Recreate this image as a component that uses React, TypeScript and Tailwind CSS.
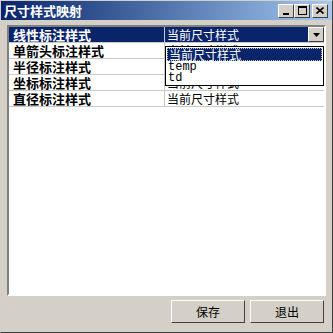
import { Fragment } from 'react'

const cjk = '"Noto Sans CJK SC", "Liberation Sans", sans-serif'

const rows = ['线性标注样式', '单箭头标注样式', '半径标注样式', '坐标标注样式', '直径标注样式']

function CaptionButton({ children, gap }: { children: React.ReactNode; gap?: boolean }) {
  return (
    <div
      className={`flex h-[14px] w-[16px] items-center justify-center border border-t-white border-l-white border-r-[#404040] border-b-[#404040] bg-[#d4d0c8] ${gap ? 'ml-[2px]' : ''}`}
    >
      {children}
    </div>
  )
}

function Button({ label }: { label: string }) {
  return (
    <button
      className="flex h-[23px] w-[74px] items-center justify-center border border-t-white border-l-white border-r-[#404040] border-b-[#404040] bg-[#d4d0c8] text-[12px] text-black"
      style={{ fontFamily: cjk }}
    >
      {label}
    </button>
  )
}

export default function App() {
  return (
    <div
      className="flex h-[333px] w-[333px] flex-col border border-t-[#d4d0c8] border-l-[#d4d0c8] border-r-[#404040] border-b-[#404040] bg-[#d4d0c8]"
      style={{ fontFamily: cjk }}
    >
      <div className="flex h-[19px] items-center bg-gradient-to-r from-[#0a246a] to-[#a6caf0] pl-[3px] pr-[4px]">
        <span className="flex-1 text-[13px] font-bold leading-none text-white">尺寸样式映射</span>
        <CaptionButton>
          <div className="mt-[7px] h-[2px] w-[6px] bg-black" />
        </CaptionButton>
        <CaptionButton>
          <div className="h-[9px] w-[9px] border border-t-2 border-black" />
        </CaptionButton>
        <CaptionButton gap>
          <svg width="8" height="7" viewBox="0 0 8 7">
            <path d="M0.5 0.5 L7.5 6.5 M7.5 0.5 L0.5 6.5" stroke="black" strokeWidth="1.6" />
          </svg>
        </CaptionButton>
      </div>

      <div className="relative mx-[6px] mt-[5px] h-[271px] border-2 border-t-[#808080] border-l-[#808080] border-r-white border-b-white bg-white">
        <div className="grid grid-cols-[156px_1fr]">
          {rows.map((name, i) => (
            <Fragment key={name}>
              <div className="flex h-[16px] items-center border-b border-r border-[#c8c8c8] pl-[4px]">
                <div
                  className={`flex h-[15px] flex-1 items-center text-[13px] font-bold leading-none ${i === 0 ? '-ml-[4px] bg-[#0a246a] pl-[4px] text-white' : 'text-black'}`}
                >
                  {name}
                </div>
              </div>
              {i === 0 ? (
                <div className="flex h-[16px] border-b border-[#c8c8c8]">
                  <div className="flex flex-1 items-center bg-[#0a246a] pl-[2px] text-[12px] leading-none text-white">
                    当前尺寸样式
                  </div>
                  <div className="flex w-[16px] items-center justify-center border border-t-white border-l-white border-r-[#404040] border-b-[#404040] bg-[#d4d0c8]">
                    <svg width="7" height="4" viewBox="0 0 7 4">
                      <path d="M0 0 H7 L3.5 4 Z" fill="black" />
                    </svg>
                  </div>
                </div>
              ) : (
                <div className="flex h-[16px] items-center border-b border-[#c8c8c8] pl-[2px] text-[12px] leading-none text-black">
                  当前尺寸样式
                </div>
              )}
            </Fragment>
          ))}
        </div>

        <div className="absolute left-[156px] top-[19px] flex w-[159px] flex-col border border-black bg-white pb-[2px]">
          <div className="mx-[1px] mt-[1px] flex h-[13px] items-center border border-dotted border-[#c0c0c0] bg-[#0a246a] pl-[1px] text-[12px] leading-none text-white">
            当前尺寸样式
          </div>
          <div
            className="flex h-[11px] items-center pl-[2px] text-[12px] leading-none text-black"
            style={{ fontFamily: '"Liberation Mono", monospace' }}
          >
            temp
          </div>
          <div
            className="flex h-[11px] items-center pl-[2px] text-[12px] leading-none text-black"
            style={{ fontFamily: '"Liberation Mono", monospace' }}
          >
            td
          </div>
        </div>
      </div>

      <div className="mr-[8px] mt-[4px] flex justify-end gap-[5px]">
        <Button label="保存" />
        <Button label="退出" />
      </div>
    </div>
  )
}
